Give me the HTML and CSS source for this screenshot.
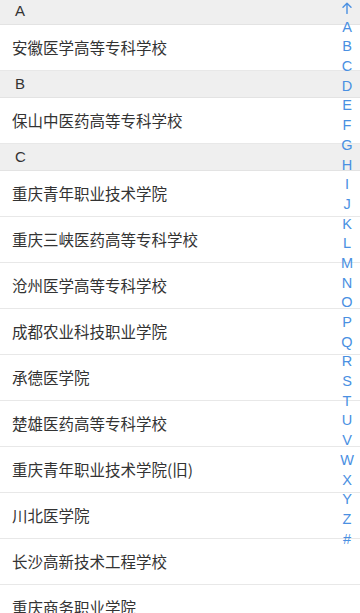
FILE: index.html
```html
<!DOCTYPE html>
<html lang="zh-CN">
<head>
<meta charset="utf-8">
<link rel="stylesheet" href="styles.css">
</head>
<body>
<div class="page">
  <div class="list">
    <div class="group-title first">A</div>
    <div class="item">安徽医学高等专科学校</div>
    <div class="group-title">B</div>
    <div class="item">保山中医药高等专科学校</div>
    <div class="group-title">C</div>
    <div class="item">重庆青年职业技术学院</div>
    <div class="item">重庆三峡医药高等专科学校</div>
    <div class="item">沧州医学高等专科学校</div>
    <div class="item">成都农业科技职业学院</div>
    <div class="item">承德医学院</div>
    <div class="item">楚雄医药高等专科学校</div>
    <div class="item">重庆青年职业技术学院(旧)</div>
    <div class="item">川北医学院</div>
    <div class="item">长沙高新技术工程学校</div>
    <div class="item">重庆商务职业学院</div>
  </div>
  <ul class="index-bar">
    <li class="top"><svg width="10" height="12" viewBox="0 0 10 12"><path d="M5 11.5V1.2M1 5.2L5 1.2L9 5.2" fill="none" stroke="#4a90e2" stroke-width="1.4" stroke-linecap="round" stroke-linejoin="round"/></svg></li><li>A</li><li>B</li><li>C</li><li>D</li><li>E</li><li>F</li><li>G</li><li>H</li><li>I</li><li>J</li><li>K</li><li>L</li><li>M</li><li>N</li><li>O</li><li>P</li><li>Q</li><li>R</li><li>S</li><li>T</li><li>U</li><li>V</li><li>W</li><li>X</li><li>Y</li><li>Z</li><li>#</li>
  </ul>
</div>
</body>
</html>
```
FILE: styles.css
```css
html, body {
  margin: 0;
  padding: 0;
  background: #ffffff;
}
body {
  font-family: "Liberation Sans", "Noto Sans CJK SC", sans-serif;
  color: #333333;
}
.page {
  position: relative;
  width: 360px;
  height: 613px;
  overflow: hidden;
}
.list {
  display: flex;
  flex-direction: column;
}
.group-title {
  height: 26px;
  line-height: 26px;
  background: #efefef;
  border-bottom: 1px solid #e3e3e3;
  padding-left: 15px;
  font-size: 15px;
  color: #333;
}
.group-title.first {
  margin-top: -2px;
}
.item {
  height: 45px;
  line-height: 45px;
  border-bottom: 1px solid #e8e8e8;
  padding-left: 12px;
  font-size: 15.5px;
  color: #333;
  font-family: "Noto Sans CJK SC", sans-serif;
  white-space: nowrap;
}
.index-bar {
  position: absolute;
  top: -3px;
  right: 0;
  width: 26px;
  margin: 0;
  padding: 0;
  list-style: none;
  display: flex;
  flex-direction: column;
  align-items: center;
}
.index-bar li {
  height: 19.7px;
  line-height: 19.7px;
  font-size: 14.5px;
  color: #4a90e2;
  text-align: center;
}
.index-bar li.top {
  display: flex;
  align-items: center;
  justify-content: center;
  padding-top: 1px;
}
```
